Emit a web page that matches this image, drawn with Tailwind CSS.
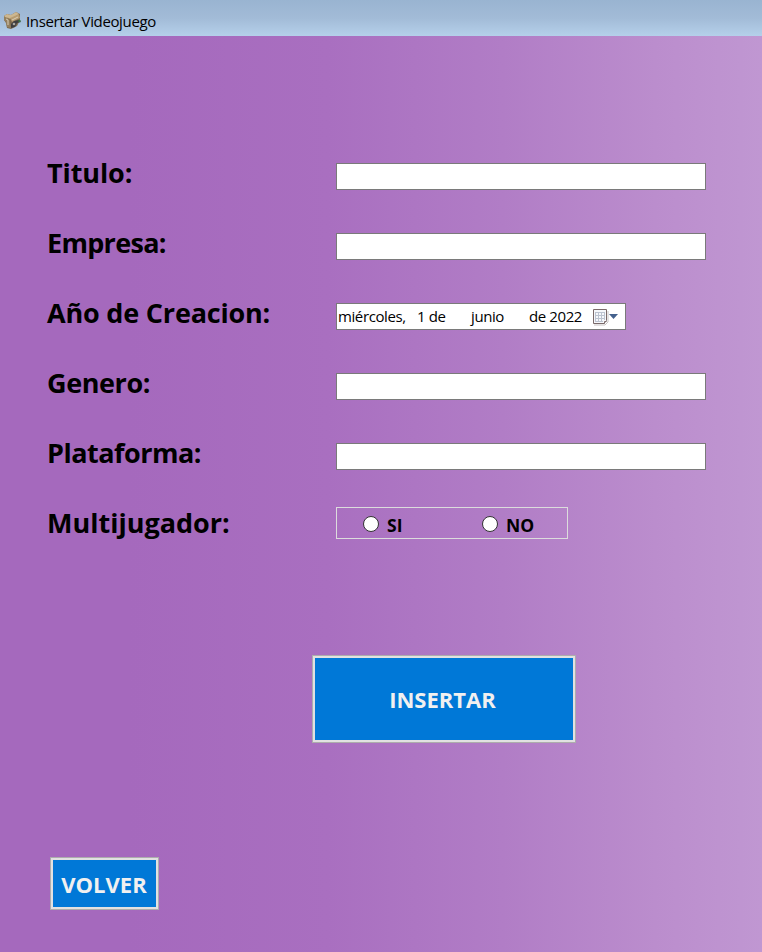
<!DOCTYPE html>
<html lang="es">
<head>
<meta charset="utf-8">
<title>Insertar Videojuego</title>
<script src="https://cdn.jsdelivr.net/npm/@tailwindcss/browser@4"></script>
</head>
<body class="w-[762px] h-[952px] overflow-hidden flex flex-col text-black font-['Open_Sans','Noto_Sans',sans-serif]">
<header class="h-9 shrink-0 flex items-center pl-[3px] pt-[6px] bg-linear-to-b from-[#99b4d1] via-[#a2bbd7] to-[#b5d0ea]">
  <svg class="w-[19px] h-[19px] -mt-[2px]" viewBox="0 0 19 19">
    <path d="M1 5 4 3l4 1 5-3 4 2v6l-3 6-6 3-4-1-1-5-2-3Z" fill="#7d6a4e"/>
    <path d="m1 5 3-2 4 1 5-3 3 2-6 4-6 1Z" fill="#cdb790"/>
    <path d="m7 7 9-4 1 4-8 4Z" fill="#b79c72"/>
    <path d="m1 6 5 1 2 10-4-1-1-5-2-2Z" fill="#94805e"/>
    <path d="m3 8 2 1v5M9 9l6-3" stroke="#d8cdb6" fill="none"/>
    <path d="m8 13 3-3 5-1 2 2-4 1-2 4-4 1Z" fill="#3e3f40"/>
    <circle cx="11" cy="13" r="1.3" fill="#aaa7a0"/>
    <circle cx="16.500" cy="10" r="1.2" fill="#3b7543"/>
  </svg>
  <h1 class="ml-[4px] text-[15px] leading-5 tracking-[-0.36px] whitespace-nowrap">Insertar Videojuego</h1>
</header>
<main class="flex-1 flex flex-col items-start pt-[105px] bg-[linear-gradient(90deg,#a569bd_0%,#a569bd_17%,#a96fc0_43%,#b17dc6_66%,#bb8dcd_86%,#c097d2_100%)]">
  <form class="w-full pl-[47px] text-[27px] font-bold">
    <div class="h-[70px] flex items-center"><label for="titulo" class="w-[289px] -mt-[6px]"><span class="tracking-[-0.1px]">Titulo:</span></label><input id="titulo" class="w-[370px] h-[27px] bg-white border border-[#7a7a7a]"></div>
    <div class="h-[70px] flex items-center"><label for="empresa" class="w-[289px] -mt-[6px]"><span class="tracking-[-0.7px]">Empresa:</span></label><input id="empresa" class="w-[370px] h-[27px] bg-white border border-[#7a7a7a]"></div>
    <div class="h-[70px] flex items-center"><label class="w-[289px] -mt-[6px] whitespace-nowrap"><span class="tracking-[-0.19px]">Año de Creacion:</span></label>
      <div class="w-[290px] h-[27px] bg-white border border-[#7a7a7a] flex items-center pl-[1px] text-[15px] font-normal whitespace-nowrap tracking-[-0.4px]">
        <span class="w-[79px]">miércoles,</span><span class="w-[54px]">1 de</span><span class="w-[58px]">junio</span><span class="w-[63px]">de 2022</span>
        <svg class="w-[28px] h-[18px] mt-[1px]" viewBox="0 0 28 18">
          <path d="M2 17h11l3-3V3" fill="none" stroke="#c9c4c4"/>
          <path d="M1.5 1.5h13v11l-2 3h-11Z" fill="#f6f7fa" stroke="#7a6a6a"/>
          <path d="M3 4.500h10M3 7.500h10M3 10.500h10M3 13.500h8M3.500 4v10M6.500 4v10M9.500 4v10M12.500 4v8" stroke="#bcc3d0" fill="none"/>
          <path d="M12.500 15.500v-2h2" fill="#fff" stroke="#7a6a6a"/>
          <path d="M17 6h9l-4.500 5Z" fill="#44618d"/>
        </svg>
      </div></div>
    <div class="h-[70px] flex items-center"><label for="genero" class="w-[289px] -mt-[6px]"><span class="tracking-[-0.4px]">Genero:</span></label><input id="genero" class="w-[370px] h-[27px] bg-white border border-[#7a7a7a]"></div>
    <div class="h-[70px] flex items-center"><label for="plataforma" class="w-[289px] -mt-[6px]"><span class="tracking-[-0.5px]">Plataforma:</span></label><input id="plataforma" class="w-[370px] h-[27px] bg-white border border-[#7a7a7a]"></div>
    <div class="h-[70px] flex items-center"><label class="w-[289px] -mt-[6px]">Multijugador:</label>
      <div class="w-[232px] h-8 mb-[6px] border border-[#dcdcdc] flex items-center pl-[26px] text-[17.500px] leading-5">
        <label class="w-[119px] h-[30px] flex items-start gap-2"><input type="radio" name="multi" class="appearance-none size-4 rounded-full bg-white border border-[#333] mt-[8px]"><span class="mt-[7px]">SI</span></label>
        <label class="h-[30px] flex items-start gap-2"><input type="radio" name="multi" class="appearance-none size-4 rounded-full bg-white border border-[#333] mt-[8px]"><span class="mt-[7px]">NO</span></label>
      </div></div>
  </form>
  <button class="ml-[312px] mt-[94px] w-[264px] h-[88px] shrink-0 border border-[#adadad] bg-[#e1e1e1] p-[2px]"><span class="flex size-full items-center justify-center bg-[#0078d7] text-[#f0f0f0] text-[22px] font-bold"><span class="mt-[1px] mr-[3px]">INSERTAR</span></span></button>
  <button class="ml-[50px] mt-[114px] w-[109px] h-[53px] shrink-0 border border-[#adadad] bg-[#e1e1e1] p-[2px]"><span class="flex size-full items-center justify-center bg-[#0078d7] text-[#f0f0f0] text-[22px] font-bold"><span class="mt-[1px] mr-[1px]">VOLVER</span></span></button>
</main>
</body>
</html>
